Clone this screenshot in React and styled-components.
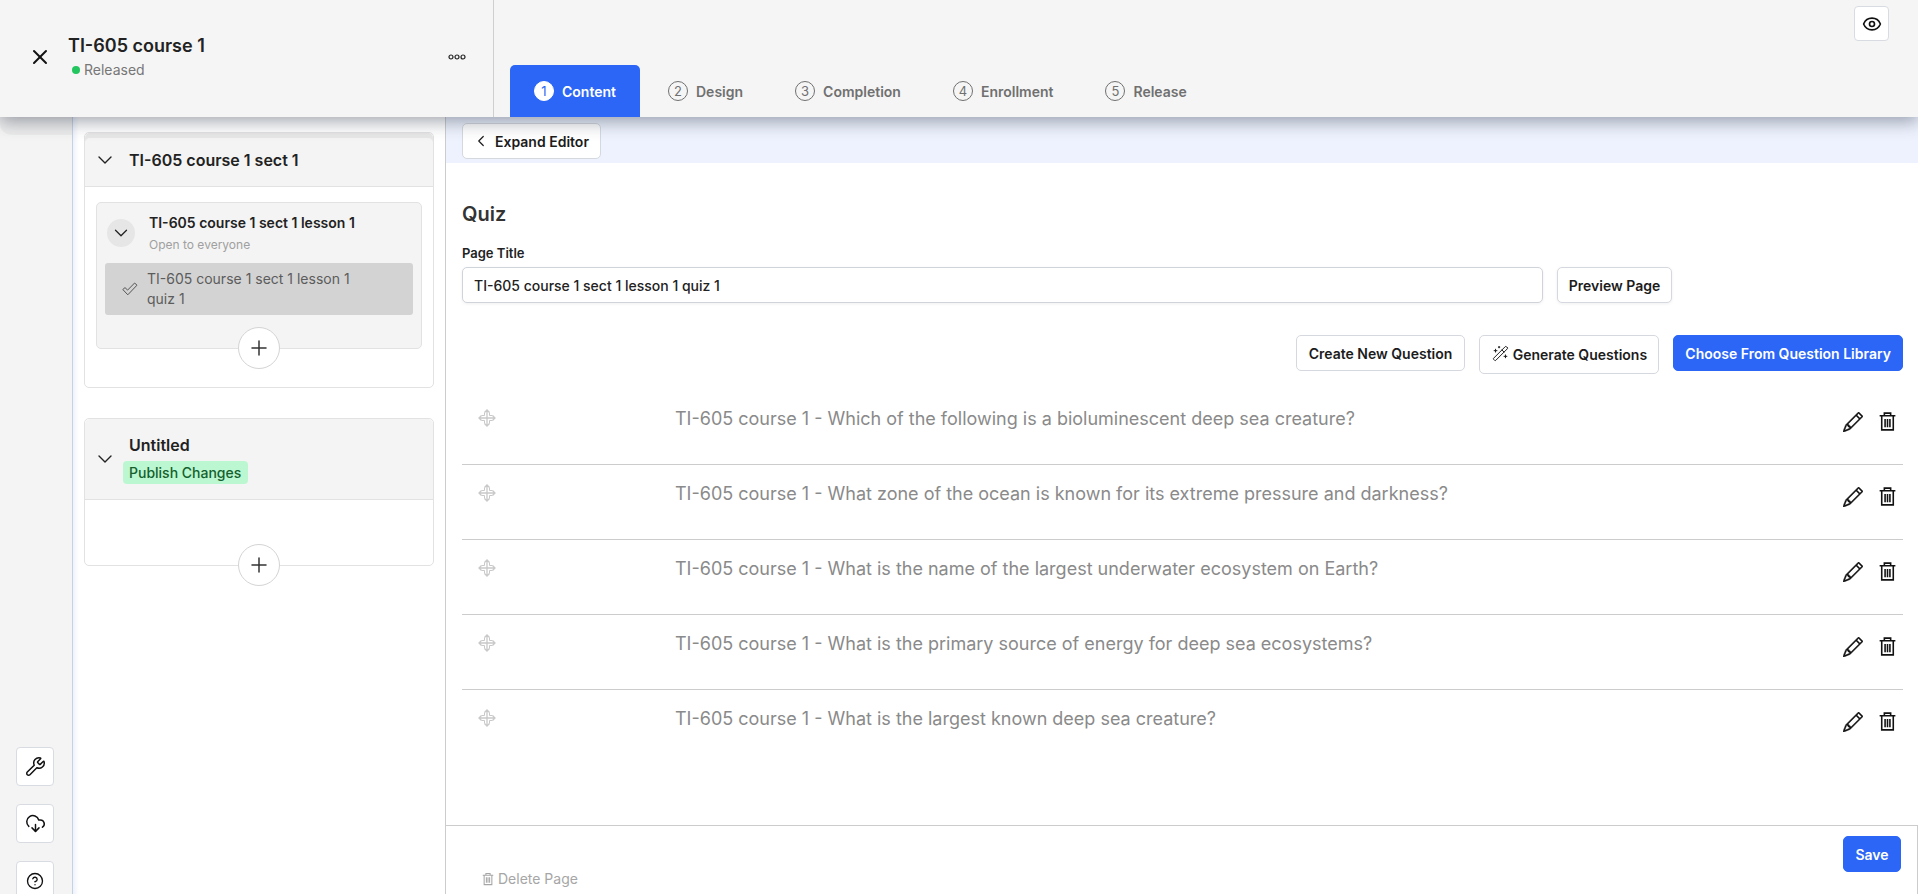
import React from 'react';
import styled, { createGlobalStyle } from 'styled-components';
import {
  X,
  Eye,
  ChevronDown,
  ChevronLeft,
  Plus,
  Wrench,
  CloudDownload,
  CircleHelp,
  WandSparkles,
} from 'lucide-react';
import { BsPencil } from 'react-icons/bs';

const GlobalStyle = createGlobalStyle`
  html, body, #root {
    margin: 0;
    height: 100%;
  }
  body {
    font-family: 'Inter', 'Liberation Sans', sans-serif;
    background: #ffffff;
    color: #222222;
    overflow: hidden;
  }
  * {
    box-sizing: border-box;
  }
`;

const Page = styled.div`
  display: flex;
  flex-direction: column;
  height: 894px;
  overflow: hidden;
`;

const Header = styled.header`
  display: flex;
  flex: 0 0 117px;
  background: #f5f5f5;
  box-shadow: 0 5px 16px rgba(40, 50, 70, 0.42);
  position: relative;
  z-index: 2;
`;

const CourseInfo = styled.div`
  display: flex;
  align-items: center;
  flex: 0 0 494px;
  padding: 2px 27px 6px 28px;
  border-right: 1px solid #cfcfcf;
`;

const CloseButton = styled.div`
  display: flex;
  flex: 0 0 24px;
  margin-right: 16px;
  color: #111111;
`;

const CourseText = styled.div`
  flex: 1;
`;

const CourseTitle = styled.div`
  font-size: 18px;
  font-weight: 600;
  line-height: 24px;
  color: #222222;
`;

const Status = styled.div`
  display: flex;
  align-items: center;
  gap: 4px;
  margin: 3px 0 0 4px;
  font-size: 14px;
  line-height: 18px;
  color: #777777;
`;

const StatusDot = styled.span`
  width: 8px;
  height: 8px;
  border-radius: 50%;
  background: #22c55e;
`;

const HeaderRight = styled.div`
  display: flex;
  flex: 1;
  flex-direction: column;
  justify-content: space-between;
`;

const EyeButton = styled.div`
  display: flex;
  align-items: center;
  justify-content: center;
  align-self: flex-end;
  width: 35px;
  height: 35px;
  margin: 6px 29px 0 0;
  background: #ffffff;
  border: 1px solid #d8dbe2;
  border-radius: 4px;
  color: #111111;
`;

const Tabs = styled.div`
  display: flex;
  gap: 4px;
  padding-left: 16px;
`;

const Tab = styled.div`
  display: flex;
  align-items: center;
  gap: 8px;
  height: 52px;
  padding: 0 24px;
  border-radius: 5px 5px 0 0;
  background: ${props => (props.$active ? '#2b66f6' : 'transparent')};
  color: ${props => (props.$active ? '#ffffff' : '#707070')};
  font-size: 14px;
  font-weight: 600;
`;

const StepNumber = styled.span`
  display: flex;
  align-items: center;
  justify-content: center;
  width: 20px;
  height: 20px;
  border-radius: 50%;
  border: 1.5px solid ${props => (props.$active ? '#ffffff' : '#707070')};
  background: ${props => (props.$active ? '#ffffff' : 'transparent')};
  color: ${props => (props.$active ? '#2b66f6' : '#707070')};
  font-size: 13px;
  font-weight: 400;
`;

const Body = styled.div`
  display: flex;
  flex: 1;
  min-height: 0;
`;

const Rail = styled.aside`
  display: flex;
  flex: 0 0 73px;
  flex-direction: column;
  align-items: center;
  gap: 18px;
  background: #f4f4f4;
  border-right: 1px solid #c6d1e2;
  padding-right: 2px;
`;

const RailCap = styled.div`
  align-self: flex-start;
  width: calc(100% + 2px);
  height: 18px;
  margin-bottom: auto;
  background: #ececec;
  border-radius: 0 0 0 12px;
`;

const RailButton = styled.div`
  display: flex;
  flex: 0 0 39px;
  align-items: center;
  justify-content: center;
  width: 38px;
  background: #ffffff;
  border: 1px solid #d8dbe2;
  border-radius: 4px;
  color: #111111;
  &:last-child {
    margin-bottom: -6px;
  }
`;

const Panel = styled.section`
  flex: 0 0 373px;
  padding: 15px 11px 0 11px;
  border-right: 1px solid #cccccc;
  background: linear-gradient(90deg, #eef2fb 0, #ffffff 6px);
  overflow: hidden;
`;

const SectionCard = styled.div`
  position: relative;
  margin-bottom: 30px;
  border: 1px solid #e2e2e2;
  border-radius: 5px;
  background: #ffffff;
`;

const SectionHead = styled.div`
  display: flex;
  align-items: center;
  height: ${props => props.$height}px;
  padding-left: 8px;
  background: #f4f4f4;
  border-bottom: 1px solid #e2e2e2;
  border-radius: 5px 5px 0 0;
  box-shadow: ${props => (props.$clipped ? 'inset 0 5px 0 #e8e8e8' : 'none')};
  color: #222222;
`;

const SectionTitleWrap = styled.div`
  margin-left: 12px;
`;

const SectionTitle = styled.div`
  font-size: 16px;
  font-weight: 600;
  line-height: 22px;
  color: #222222;
`;

const Badge = styled.div`
  display: inline-block;
  margin: 5px 0 0 -6px;
  padding: 0 7px 0 6px;
  background: #bbf7d0;
  border-radius: 4px;
  color: #14602e;
  font-size: 14px;
  font-weight: 500;
  line-height: 23px;
`;

const SectionBody = styled.div`
  padding: ${props => props.$padding};
  height: ${props => props.$height}px;
`;

const LessonCard = styled.div`
  position: relative;
  height: 147px;
  padding-top: 7px;
  background: #f4f4f4;
  border: 1px solid #e2e2e2;
  border-radius: 5px;
`;

const LessonHead = styled.div`
  display: flex;
  align-items: center;
  gap: 14px;
  height: 46px;
  margin-bottom: 7px;
  padding-left: 10px;
`;

const ChevronCircle = styled.div`
  display: flex;
  align-items: center;
  justify-content: center;
  width: 28px;
  height: 28px;
  border-radius: 50%;
  background: #e6e6e6;
  color: #222222;
`;

const LessonTitle = styled.div`
  font-size: 14px;
  font-weight: 600;
  line-height: 20px;
  color: #222222;
`;

const LessonSub = styled.div`
  margin-top: 4px;
  font-size: 12px;
  line-height: 16px;
  color: #a0a0a0;
`;

const QuizRow = styled.div`
  display: flex;
  align-items: center;
  gap: 9px;
  height: 52px;
  margin: 0 8px;
  padding-left: 17px;
  background: #d3d3d3;
  border-radius: 3px;
  color: #5c5c5c;
`;

const QuizTitle = styled.div`
  max-width: 215px;
  font-size: 14px;
  line-height: 20px;
`;

const AddButton = styled.div`
  position: absolute;
  left: 50%;
  bottom: -21px;
  display: flex;
  align-items: center;
  justify-content: center;
  width: 42px;
  height: 42px;
  margin-left: -21px;
  background: #ffffff;
  border: 1px solid #d4d4d4;
  border-radius: 50%;
  color: #333333;
`;

const Main = styled.main`
  display: flex;
  flex: 1;
  flex-direction: column;
  min-width: 0;
`;

const EditorBand = styled.div`
  flex: 0 0 46px;
  padding: 6px 0 0 16px;
  background: #eef2fe;
`;

const Button = styled.div`
  display: inline-flex;
  align-items: center;
  justify-content: center;
  height: ${props => props.$height || 36}px;
  padding: 0 ${props => (props.$primary ? 11 : 12)}px;
  background: ${props => (props.$primary ? '#2b66f6' : '#ffffff')};
  border: 1px solid ${props => (props.$primary ? '#2b66f6' : '#d5d8df')};
  border-radius: 5px;
  color: ${props => (props.$primary ? '#ffffff' : '#1c1c1c')};
  font-size: 14px;
  font-weight: 600;
  white-space: nowrap;
`;

const ExpandButton = styled(Button)`
  justify-content: flex-start;
  gap: 5px;
  width: 139px;
  padding: 0 9px;
`;

const Editor = styled.div`
  display: flex;
  flex: 1;
  flex-direction: column;
  min-height: 0;
  padding: 38px 15px 0 16px;
`;

const PageHeading = styled.h2`
  margin: 0;
  font-size: 20px;
  font-weight: 600;
  line-height: 26px;
  color: #333333;
`;

const FieldLabel = styled.div`
  margin: 18px 0 6px;
  font-size: 13px;
  font-weight: 600;
  line-height: 16px;
  color: #222222;
`;

const TitleRow = styled.div`
  display: flex;
  gap: 14px;
  padding-right: 231px;
`;

const TitleInput = styled.div`
  display: flex;
  align-items: center;
  flex: 1;
  height: 36px;
  padding: 0 11px;
  background: #ffffff;
  border: 1px solid #d0d3da;
  border-radius: 5px;
  box-shadow: 0 1px 3px rgba(60, 70, 90, 0.08);
  font-size: 14px;
  font-weight: 500;
  color: #222222;
`;

const PreviewButton = styled(Button)`
  flex: 0 0 115px;
  height: 36px;
  padding: 0 8px;
  box-shadow: 0 1px 3px rgba(60, 70, 90, 0.08);
`;

const Toolbar = styled.div`
  display: flex;
  align-items: flex-start;
  justify-content: flex-end;
  gap: 14px;
  margin: 32px 0 16px;
`;

const GenerateButton = styled(Button)`
  align-items: flex-start;
  gap: 4px;
  padding-top: 10px;
  width: 180px;
`;

const GenerateIcon = styled.span`
  display: flex;
  margin-top: -1px;
`;

const QuestionList = styled.div`
  flex: 1;
  min-height: 0;
`;

const QuestionRow = styled.div`
  display: flex;
  align-items: flex-start;
  height: 75px;
  padding: 18px 5px 0 0;
  border-bottom: ${props => (props.$last ? 'none' : '1px solid #cccccc')};
`;

const DragHandle = styled.div`
  display: flex;
  flex: 0 0 213px;
  padding: 1px 0 0 16px;
  color: #c9c9c9;
`;

const QuestionText = styled.div`
  flex: 1;
  font-size: 18px;
  line-height: 22px;
  color: #8a8a8a;
`;

const RowActions = styled.div`
  display: flex;
  align-items: center;
  gap: 14px;
  margin-top: 3px;
  color: #111111;
`;

const PencilIcon = styled(BsPencil)`
  stroke: currentColor;
  stroke-width: 0.35px;
`;

const Footer = styled.footer`
  display: flex;
  flex: 0 0 69px;
  align-items: flex-start;
  justify-content: space-between;
  padding: 10px 16px 0 35px;
  border-top: 1px solid #cccccc;
  border-right: 1px solid #cccccc;
`;

const DeletePage = styled.div`
  display: flex;
  align-items: center;
  gap: 3px;
  margin-top: 34px;
  font-size: 14px;
  color: #a6a6a6;
`;

const SaveButton = styled(Button)`
  width: 58px;
  padding: 0;
`;

const DotsIcon = () => (
  <svg width="18" height="6" viewBox="0 0 18 6" fill="none" stroke="#222" strokeWidth="1.2">
    <circle cx="3" cy="3" r="2" />
    <circle cx="9" cy="3" r="2" />
    <circle cx="15" cy="3" r="2" />
  </svg>
);

const TrashIcon = ({ size = 21 }) => (
  <svg width={size} height={size} viewBox="0 0 20 20" fill="none" stroke="currentColor" strokeWidth="1.5">
    <path d="M2.5 4.5h15M7 4.5V2h6v2.5M4.5 4.5V18h11V4.5M7.7 7.5v8M10 7.5v8M12.3 7.5v8" />
  </svg>
);

const MoveIcon = () => (
  <svg width="18" height="18" viewBox="0 0 18 18" fill="none" stroke="currentColor" strokeWidth="1.3">
    <path d="M9 1v16M1 9h16M6.5 3.5L9 1l2.5 2.5M6.5 14.5L9 17l2.5-2.5M3.5 6.5L1 9l2.5 2.5M14.5 6.5L17 9l-2.5 2.5" />
    <path d="M6.5 3.5v3h-3M11.5 3.5v3h3M6.5 14.5v-3h-3M11.5 14.5v-3h3" strokeWidth="1" />
  </svg>
);

const CheckIcon = () => (
  <svg width="16" height="14" viewBox="0 0 16 14" fill="none" stroke="#555" strokeWidth="1">
    <path d="M0.8 7.5L3 5.6l2.6 2.5L12.6 1l2.4 2.2L5.8 12.8z" />
  </svg>
);

const steps = ['Content', 'Design', 'Completion', 'Enrollment', 'Release'];

const questions = [
  'TI-605 course 1 - Which of the following is a bioluminescent deep sea creature?',
  'TI-605 course 1 - What zone of the ocean is known for its extreme pressure and darkness?',
  'TI-605 course 1 - What is the name of the largest underwater ecosystem on Earth?',
  'TI-605 course 1 - What is the primary source of energy for deep sea ecosystems?',
  'TI-605 course 1 - What is the largest known deep sea creature?',
];

const App = () => (
  <Page>
    <GlobalStyle />
    <Header>
      <CourseInfo>
        <CloseButton><X size={24} strokeWidth={2} /></CloseButton>
        <CourseText>
          <CourseTitle>TI-605 course 1</CourseTitle>
          <Status><StatusDot />Released</Status>
        </CourseText>
        <DotsIcon />
      </CourseInfo>
      <HeaderRight>
        <EyeButton><Eye size={20} strokeWidth={2} /></EyeButton>
        <Tabs>
          {steps.map((step, i) => (
            <Tab key={step} $active={i === 0}>
              <StepNumber $active={i === 0}>{i + 1}</StepNumber>
              {step}
            </Tab>
          ))}
        </Tabs>
      </HeaderRight>
    </Header>
    <Body>
      <Rail>
        <RailCap />
        <RailButton><Wrench size={21} strokeWidth={1.7} /></RailButton>
        <RailButton><CloudDownload size={21} strokeWidth={1.7} /></RailButton>
        <RailButton><CircleHelp size={18} strokeWidth={1.8} /></RailButton>
      </Rail>
      <Panel>
        <SectionCard>
          <SectionHead $height={54} $clipped>
            <ChevronDown size={24} strokeWidth={1.4} />
            <SectionTitleWrap>
              <SectionTitle>TI-605 course 1 sect 1</SectionTitle>
            </SectionTitleWrap>
          </SectionHead>
          <SectionBody $padding="15px 11px 0" $height={200}>
            <LessonCard>
              <LessonHead>
                <ChevronCircle><ChevronDown size={22} strokeWidth={1.4} /></ChevronCircle>
                <div>
                  <LessonTitle>TI-605 course 1 sect 1 lesson 1</LessonTitle>
                  <LessonSub>Open to everyone</LessonSub>
                </div>
              </LessonHead>
              <QuizRow>
                <CheckIcon />
                <QuizTitle>TI-605 course 1 sect 1 lesson 1 quiz 1</QuizTitle>
              </QuizRow>
              <AddButton><Plus size={24} strokeWidth={1.5} /></AddButton>
            </LessonCard>
          </SectionBody>
        </SectionCard>
        <SectionCard>
          <SectionHead $height={81}>
            <ChevronDown size={24} strokeWidth={1.4} />
            <SectionTitleWrap>
              <SectionTitle>Untitled</SectionTitle>
              <Badge>Publish Changes</Badge>
            </SectionTitleWrap>
          </SectionHead>
          <SectionBody $padding="0" $height={65} />
          <AddButton><Plus size={24} strokeWidth={1.5} /></AddButton>
        </SectionCard>
      </Panel>
      <Main>
        <EditorBand>
          <ExpandButton>
            <ChevronLeft size={18} strokeWidth={1.6} />
            Expand Editor
          </ExpandButton>
        </EditorBand>
        <Editor>
          <PageHeading>Quiz</PageHeading>
          <FieldLabel>Page Title</FieldLabel>
          <TitleRow>
            <TitleInput>TI-605 course 1 sect 1 lesson 1 quiz 1</TitleInput>
            <PreviewButton>Preview Page</PreviewButton>
          </TitleRow>
          <Toolbar>
            <Button>Create New Question</Button>
            <GenerateButton $height={39}>
              <GenerateIcon><WandSparkles size={17} strokeWidth={1.4} /></GenerateIcon>
              Generate Questions
            </GenerateButton>
            <Button $primary>Choose From Question Library</Button>
          </Toolbar>
          <QuestionList>
            {questions.map((text, i) => (
              <QuestionRow key={text} $last={i === questions.length - 1}>
                <DragHandle><MoveIcon /></DragHandle>
                <QuestionText>{text}</QuestionText>
                <RowActions>
                  <PencilIcon size={20} />
                  <TrashIcon />
                </RowActions>
              </QuestionRow>
            ))}
          </QuestionList>
        </Editor>
        <Footer>
          <DeletePage><TrashIcon size={14} />Delete Page</DeletePage>
          <SaveButton $primary>Save</SaveButton>
        </Footer>
      </Main>
    </Body>
  </Page>
);

export default App;
